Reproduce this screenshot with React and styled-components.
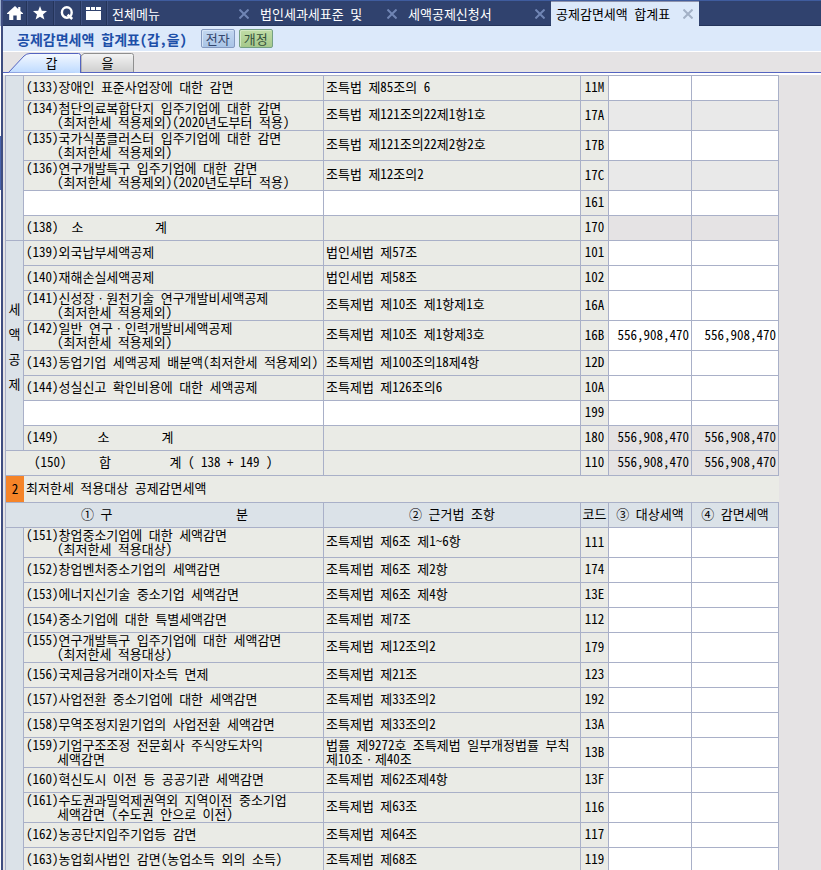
import { useState } from "react";
import styled, { createGlobalStyle, css } from "styled-components";

const LINE = "#a9b0c8";

const GlobalStyle = createGlobalStyle`
  * {
    box-sizing: border-box;
  }
  body {
    margin: 0;
    background: #e5e3e4;
  }
  body, button, input {
    font-family: "Noto Sans Mono CJK KR", "Noto Sans CJK KR", sans-serif;
    font-size: 13px;
    color: #000;
  }
  button {
    padding: 0;
    border: none;
    background: none;
    cursor: pointer;
  }
`;
const Container = styled.div`
  display: flex;
  height: 100vh;
  overflow: hidden;
`;
const Rail = styled.div`
  flex: none;
  width: 3px;
  border-right: 2px solid #3f4d80;
  background: linear-gradient(#9db0cf 26px, #fff 26px, #fff 136px, #4a64ac 136px, #4a64ac 190px, #fff 190px);
`;
const Page = styled.div`
  flex: 1;
  min-width: 0;
`;
const TopBar = styled.header`
  display: flex;
  height: 26px;
  border-top: 1px solid #3f5c9e;
  background: #30426e;
  box-shadow: inset 0 -1px #24345a;
`;
const IconButton = styled.button`
  display: flex;
  align-items: center;
  justify-content: center;
  width: ${(p) => (p.$first ? 24 : 27)}px;
  height: 24px;
  border-right: 1px solid #24345a;
  box-shadow: 1px 0 #3f5180;
  &:last-child {
    width: 26px;
  }
`;
const IconGroup = styled.nav`
  display: flex;
  flex: none;
`;
const WindowTab = styled.div`
  display: flex;
  align-items: center;
  width: 148px;
  height: 25px;
  padding: 0 5px;
  background: ${(p) => (p.$active ? "#dce9fa" : "transparent")};
  box-shadow: ${(p) => (p.$active ? "inset 0 1px #8e93ac" : "none")};
  > button:first-child {
    flex: 1;
    height: 24px;
    line-height: 23px;
    text-align: left;
    white-space: nowrap;
    color: ${(p) => (p.$active ? "#000" : "#fff")};
  }
`;
const CloseButton = styled.button`
  display: flex;
  align-items: center;
  justify-content: center;
  width: 12px;
  height: 12px;
  color: ${(p) => (p.$active ? "#a3b1c6" : "#7085b4")};
`;
const TitleBar = styled.div`
  display: flex;
  align-items: center;
  height: 26px;
  padding-left: 14px;
  border-bottom: 1px solid #fff;
  background: #dce9fa;
`;
const Title = styled.h1`
  margin: 0 14px 0 0;
  font-size: 14px;
  line-height: 24px;
  font-weight: 700;
  color: #1c4fa8;
`;
const Badge = styled.button`
  width: 34px;
  height: 19px;
  margin-right: 4px;
  border: 1px solid;
  border-radius: 2px;
  line-height: 16px;
  ${(p) =>
    p.$green
      ? css`
          color: #34503a;
          border-color: #74a084;
          background: linear-gradient(#c0dda6, #a6c88c);
          box-shadow: inset 1px 1px #d3e8c2;
        `
      : css`
          color: #34466c;
          border-color: #8499bf;
          background: linear-gradient(#c2d7f0, #a9c4e6);
          box-shadow: inset 1px 1px #d6e5f7;
        `}
`;
const SheetTabs = styled.div`
  display: flex;
  align-items: flex-end;
  height: 23px;
  padding-left: 5px;
  border-bottom: 2px solid #fff;
  box-shadow: inset 0 -1px #5464c0;
`;
const SheetTabButton = styled.button`
  position: relative;
  width: ${(p) => p.$width}px;
  height: 20px;
  padding-left: ${(p) => p.$indent}px;
  line-height: 18px;
  svg {
    position: absolute;
    left: 0;
    top: 0;
  }
  span {
    position: relative;
  }
`;
const Sheet = styled.main`
  padding: 0 42px 0 2px;
`;
const Table = styled.table`
  width: 100%;
  table-layout: fixed;
  border-spacing: 0;
  border-top: 1px solid ${LINE};
  border-left: 1px solid ${LINE};
`;
const Row = styled.tr`
  height: ${(p) => (p.$tall ? 30 : 25)}px;
`;
const Cell = styled.td`
  padding: 0 0 ${(p) => (p.$twoLines ? 1 : 3)}px 2px;
  border-right: 1px solid ${LINE};
  border-bottom: 1px solid ${LINE};
  background: #eaebe6;
  line-height: 14px;
  white-space: pre;
`;
const CodeCell = styled(Cell)`
  padding: 0 0 2px;
  text-align: center;
`;
const AmountCell = styled(Cell)`
  padding: 0 2px 2px 0;
  text-align: right;
  background: ${(p) => (p.$tone === "total" ? "#e5e3e4" : p.$tone === "locked" ? "#e9e9e9" : "#fff")};
`;
const InputCell = styled(Cell)`
  padding: 0;
  background: #fff;
`;
const Field = styled.input`
  display: block;
  width: 100%;
  height: 24px;
  padding: 0 2px 2px;
  border: none;
  outline: none;
  background: transparent;
  text-align: ${(p) => (p.$amount ? "right" : "left")};
`;
const SideCell = styled.th`
  padding: 0;
  border-right: 1px solid ${LINE};
  border-bottom: 1px solid ${LINE};
  background: #dbe2e8;
  font-weight: 400;
  line-height: 25px;
  text-align: center;
`;
const HeadCell = styled(SideCell)`
  padding-bottom: 3px;
  line-height: 14px;
  white-space: pre;
`;
const Second = styled.span`
  display: block;
  padding-left: 31px;
`;
const SectionRow = styled.tr`
  height: 27px;
`;
const SectionNumber = styled.th`
  padding: 0 0 2px;
  border-bottom: 1px solid ${LINE};
  background: #f58428;
  font-weight: 400;
`;
const SectionTitle = styled.th`
  padding: 0 0 3px 2px;
  border-bottom: 1px solid ${LINE};
  background: #eaebe6;
  font-weight: 400;
  line-height: 14px;
  text-align: left;
`;

const REDUCTIONS = [
  { name: "(133)장애인 표준사업장에 대한 감면", law: "조특법 제85조의 6", code: "11M" },
  { name: "(134)첨단의료복합단지 입주기업에 대한 감면", sub: "(최저한세 적용제외)(2020년도부터 적용)", law: "조특법 제121조의22제1항1호", code: "17A", tone: "locked" },
  { name: "(135)국가식품클러스터 입주기업에 대한 감면", sub: "(최저한세 적용제외)", law: "조특법 제121조의22제2항2호", code: "17B" },
  { name: "(136)연구개발특구 입주기업에 대한 감면", sub: "(최저한세 적용제외)(2020년도부터 적용)", law: "조특법 제12조의2", code: "17C", tone: "locked" },
  { blank: true, code: "161" },
  { name: "(138)  소           계", code: "170", tone: "total" },
];
const CREDITS = [
  { name: "(139)외국납부세액공제", law: "법인세법 제57조", code: "101" },
  { name: "(140)재해손실세액공제", law: "법인세법 제58조", code: "102" },
  { name: "(141)신성장ㆍ원천기술 연구개발비세액공제", sub: "(최저한세 적용제외)", law: "조특제법 제10조 제1항제1호", code: "16A" },
  { name: "(142)일반 연구ㆍ인력개발비세액공제", sub: "(최저한세 적용제외)", law: "조특제법 제10조 제1항제3호", code: "16B", amount: "556,908,470" },
  { name: "(143)동업기업 세액공제 배분액(최저한세 적용제외)", law: "조특제법 제100조의18제4항", code: "12D" },
  { name: "(144)성실신고 확인비용에 대한 세액공제", law: "조특제법 제126조의6", code: "10A" },
  { blank: true, code: "199" },
  { name: "(149)      소        계", code: "180", tone: "total", amount: "556,908,470" },
];
const MINIMUM_TAX = [
  { name: "(151)창업중소기업에 대한 세액감면", sub: "(최저한세 적용대상)", law: "조특제법 제6조 제1~6항", code: "111" },
  { name: "(152)창업벤처중소기업의 세액감면", law: "조특제법 제6조 제2항", code: "174" },
  { name: "(153)에너지신기술 중소기업 세액감면", law: "조특제법 제6조 제4항", code: "13E" },
  { name: "(154)중소기업에 대한 특별세액감면", law: "조특제법 제7조", code: "112" },
  { name: "(155)연구개발특구 입주기업에 대한 세액감면", sub: "(최저한세 적용대상)", law: "조특제법 제12조의2", code: "179" },
  { name: "(156)국제금융거래이자소득 면제", law: "조특제법 제21조", code: "123" },
  { name: "(157)사업전환 중소기업에 대한 세액감면", law: "조특제법 제33조의2", code: "192" },
  { name: "(158)무역조정지원기업의 사업전환 세액감면", law: "조특제법 제33조의2", code: "13A" },
  { name: "(159)기업구조조정 전문회사 주식양도차익", sub: "세액감면", law: "법률 제9272호 조특제법 일부개정법률 부칙\n제10조ㆍ제40조", code: "13B" },
  { name: "(160)혁신도시 이전 등 공공기관 세액감면", law: "조특제법 제62조제4항", code: "13F" },
  { name: "(161)수도권과밀억제권역외 지역이전 중소기업", sub: "세액감면 (수도권 안으로 이전)", law: "조특제법 제63조", code: "116" },
  { name: "(162)농공단지입주기업등 감면", law: "조특제법 제64조", code: "117" },
  { name: "(163)농업회사법인 감면(농업소득 외의 소득)", law: "조특제법 제68조", code: "119" },
];
const WINDOWS = ["전체메뉴", "법인세과세표준 및", "세액공제신청서", "공제감면세액 합계표"];

function Amount({ row, label }) {
  if (row.tone) {
    return <AmountCell $tone={row.tone}>{row.amount}</AmountCell>;
  }
  return (
    <InputCell>
      <Field $amount aria-label={`${row.code} ${label}`} defaultValue={row.amount} />
    </InputCell>
  );
}

function ItemRow({ row, side }) {
  return (
    <Row $tall={Boolean(row.sub)}>
      {side}
      {row.blank ? (
        <>
          <InputCell>
            <Field aria-label={`${row.code} 구분`} />
          </InputCell>
          <InputCell>
            <Field aria-label={`${row.code} 근거법 조항`} />
          </InputCell>
        </>
      ) : (
        <>
          <Cell $twoLines={Boolean(row.sub)}>
            {row.name}
            {row.sub && <Second>{row.sub}</Second>}
          </Cell>
          <Cell $twoLines={row.law?.includes("\n")}>{row.law}</Cell>
        </>
      )}
      <CodeCell>{row.code}</CodeCell>
      <Amount row={row} label="대상세액" />
      <Amount row={row} label="감면세액" />
    </Row>
  );
}

function ItemGroup({ rows, title }) {
  return rows.map((row, i) => (
    <ItemRow
      key={row.code}
      row={row}
      side={
        i === 0 && (
          <SideCell rowSpan={rows.length}>
            {title.split("").map((char) => (
              <div key={char}>{char}</div>
            ))}
          </SideCell>
        )
      }
    />
  ));
}

function CloseIcon() {
  return (
    <svg width="10" height="10" viewBox="0 0 10 10" stroke="currentColor" strokeWidth="2">
      <path d="M0.5 0.5 9.5 9.5M9.5 0.5 0.5 9.5" />
    </svg>
  );
}

function App() {
  const [sheet, setSheet] = useState("갑");

  return (
    <Container>
      <GlobalStyle />
      <Rail />
      <Page>
        <TopBar>
          <IconGroup>
            <IconButton $first aria-label="홈">
              <svg width="16" height="14" viewBox="0 0 16 14" fill="#fff">
                <path d="M8 0 0 7.2V8h2.2v6h4.1V9.4h3.4V14h4.1V8H16v-.8L13.4 5V1h-2.2v2Z" />
              </svg>
            </IconButton>
            <IconButton aria-label="즐겨찾기">
              <svg width="14" height="14" viewBox="0 0 14 14" fill="#fff">
                <path d="M7 0 8.8 4.8 14 5.1 10 8.5 11.4 13.6 7 10.8 2.6 13.6 4 8.5 0 5.1 5.2 4.8Z" />
              </svg>
            </IconButton>
            <IconButton aria-label="검색">
              <svg width="14" height="14" viewBox="0 0 14 14" fill="none" stroke="#fff">
                <ellipse cx="6.8" cy="6.5" rx="4.9" ry="5.2" strokeWidth="2.4" />
                <path d="M7.6 8.8 12.2 13" strokeWidth="2.6" />
              </svg>
            </IconButton>
            <IconButton aria-label="메뉴">
              <svg width="15" height="13" viewBox="0 0 15 13" fill="#fff">
                <path d="M0 0h4v3H0zM5 0h4v3H5zM10 0h5v3h-5zM0 4h15v9H0z" />
              </svg>
            </IconButton>
          </IconGroup>
          {WINDOWS.map((name, i) => {
            const active = i === WINDOWS.length - 1;
            return (
              <WindowTab key={name} $active={active}>
                <button>{name}</button>
                <CloseButton $active={active} aria-label={`${name} 닫기`}>
                  <CloseIcon />
                </CloseButton>
              </WindowTab>
            );
          })}
        </TopBar>
        <TitleBar>
          <Title>공제감면세액 합계표(갑,을)</Title>
          <Badge>전자</Badge>
          <Badge $green>개정</Badge>
        </TitleBar>
        <SheetTabs role="tablist">
          <SheetTabButton role="tab" aria-selected={sheet === "갑"} $width={73} $indent={14} onClick={() => setSheet("갑")}>
            <svg width="73" height="20" viewBox="0 0 73 20">
              <defs>
                <linearGradient id="blue" x1="0" y1="0" x2="0" y2="1">
                  <stop offset="0" stopColor="#f4f9ff" />
                  <stop offset="1" stopColor="#bedaff" />
                </linearGradient>
              </defs>
              <path d="M0.5 19.5 16 3Q18.5 .5 22 .5H70.5Q72.5 .5 72.5 2.5V20" fill="url(#blue)" stroke="#5464c0" />
            </svg>
            <span>갑</span>
          </SheetTabButton>
          <SheetTabButton role="tab" aria-selected={sheet === "을"} $width={53} $indent={0} onClick={() => setSheet("을")}>
            <svg width="53" height="20" viewBox="0 0 53 20">
              <defs>
                <linearGradient id="gray" x1="0" y1="0" x2="0" y2="1">
                  <stop offset="0" stopColor="#f4f4f4" />
                  <stop offset="1" stopColor="#cfcfcf" />
                </linearGradient>
              </defs>
              <path d="M0 19V3L3 .5H50.5Q52.5 .5 52.5 2.5V19" fill="url(#gray)" stroke="#8f8f8f" />
              <path d="M0 19.5H53" stroke="#5464c0" />
            </svg>
            <span>을</span>
          </SheetTabButton>
        </SheetTabs>
        <Sheet>
          <Table>
            <colgroup>
              <col width="18" />
              <col width="300" />
              <col />
              <col width="28" />
              <col width="83" />
              <col width="87" />
            </colgroup>
            <tbody>
              <ItemGroup rows={REDUCTIONS} title="" />
              <ItemGroup rows={CREDITS} title="세액공제" />
              <Row>
                <Cell colSpan={2}>{"    (150)     합         계 ( 138 + 149 )"}</Cell>
                <Cell />
                <CodeCell>110</CodeCell>
                <AmountCell $tone="total">556,908,470</AmountCell>
                <AmountCell $tone="total">556,908,470</AmountCell>
              </Row>
              <SectionRow>
                <SectionNumber>2</SectionNumber>
                <SectionTitle colSpan={5}>최저한세 적용대상 공제감면세액</SectionTitle>
              </SectionRow>
              <Row>
                <HeadCell colSpan={2}>{"① 구                   분"}</HeadCell>
                <HeadCell>② 근거법 조항</HeadCell>
                <HeadCell>코드</HeadCell>
                <HeadCell>③ 대상세액</HeadCell>
                <HeadCell>④ 감면세액</HeadCell>
              </Row>
              <ItemGroup rows={MINIMUM_TAX} title="" />
            </tbody>
          </Table>
        </Sheet>
      </Page>
    </Container>
  );
}

export default App;
